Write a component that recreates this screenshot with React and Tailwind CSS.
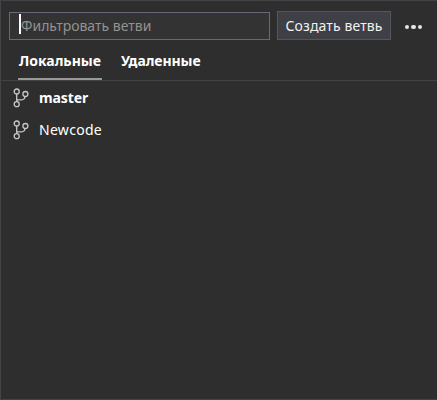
import React from "react";

function BranchIcon() {
  return (
    <svg width="18" height="22" viewBox="0 0 18 22" fill="none" stroke="#c8c8c8" strokeWidth="1.3" className="shrink-0">
      <circle cx="4.7" cy="4.5" r="2.5" />
      <circle cx="13.4" cy="7" r="2.5" />
      <circle cx="4.7" cy="17.2" r="2.5" />
      <path d="M4.7 7V14.7M4.7 12.8H9.6Q12.6 12.8 13.1 9.5" />
    </svg>
  );
}

function Branch({ name, className }) {
  return (
    <li className="flex h-8 items-center pl-[11px]">
      <BranchIcon />
      <span className={`ml-[9px] whitespace-nowrap text-[14px] leading-5 text-white ${className}`}>{name}</span>
    </li>
  );
}

export default function App() {
  return (
    <div className="flex h-[400px] w-[437px] flex-col overflow-hidden border border-r-0 border-[#434346] bg-[#2e2e2e] font-['Noto_Sans','Open_Sans',sans-serif] text-[14px] text-[#f1f1f1]">
      <header className="flex items-start pl-2 pt-[10px]">
        <div className="mt-px flex h-7 w-[261px] items-center border border-[#68687a] bg-[#333333] pl-[9px]">
          <span className="-mt-1 h-5 w-[2px] shrink-0 bg-white" />
          <span className="whitespace-nowrap leading-5 text-[#929292]">Фильтровать ветви</span>
        </div>
        <button className="ml-[7px] flex h-[29px] w-[114px] items-center justify-center whitespace-nowrap border border-[#555560] bg-[#3f3f46] leading-5 tracking-[0.12px] text-[#f1f1f1]">
          <span>Создать ветвь</span>
        </button>
        <button className="ml-[14px] mt-[13.5px] flex gap-[2px]" aria-label="Ещё">
          <span className="size-[4.4px] rounded-full bg-[#e4e4e4]" />
          <span className="size-[4.4px] rounded-full bg-[#e4e4e4]" />
          <span className="size-[4.4px] rounded-full bg-[#e4e4e4]" />
        </button>
      </header>
      <nav className="flex h-[41px] shrink-0 gap-[19px] border-b border-[#434346] pl-[17px] pt-[11px] font-bold text-white">
        <span className="h-[29px] w-[84px] whitespace-nowrap border-b-2 border-[#999999] pl-px leading-5">Локальные</span>
        <span className="whitespace-nowrap leading-5 tracking-[-0.1px]">Удаленные</span>
      </nav>
      <ul className="pt-px">
        <Branch name="master" className="font-bold tracking-[-0.1px]" />
        <Branch name="Newcode" className="tracking-[0.3px]" />
      </ul>
    </div>
  );
}
